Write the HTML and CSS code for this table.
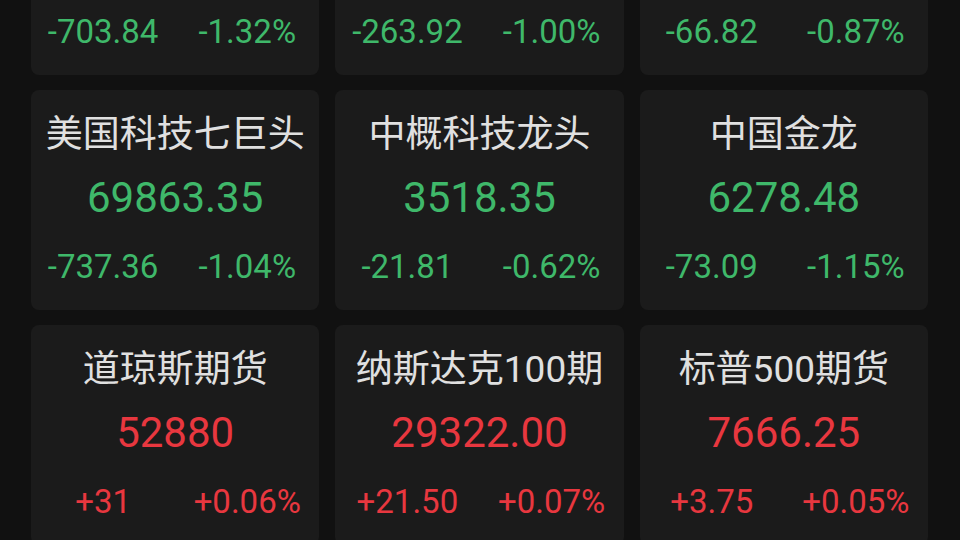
FILE: index.html
```html
<!DOCTYPE html>
<html lang="zh-CN">
<head>
  <meta charset="UTF-8" />
  <meta name="viewport" content="width=device-width, initial-scale=1.0"/>
  <title>全球指数</title>
  <link rel="stylesheet" href="styles.css">
</head>
<body>

  <div class="grid">
    <div class="card down">
      <div class="name">道琼斯</div>
      <div class="price">52617.29</div>
      <div class="change"><span>-703.84</span><span>-1.32%</span></div>
    </div>
    <div class="card down">
      <div class="name">纳斯达克</div>
      <div class="price">26128.41</div>
      <div class="change"><span>-263.92</span><span>-1.00%</span></div>
    </div>
    <div class="card down">
      <div class="name">标普500</div>
      <div class="price">7613.27</div>
      <div class="change"><span>-66.82</span><span>-0.87%</span></div>
    </div>

    <div class="card down">
      <div class="name">美国科技七巨头</div>
      <div class="price">69863.35</div>
      <div class="change"><span>-737.36</span><span>-1.04%</span></div>
    </div>
    <div class="card down">
      <div class="name">中概科技龙头</div>
      <div class="price">3518.35</div>
      <div class="change"><span>-21.81</span><span>-0.62%</span></div>
    </div>
    <div class="card down">
      <div class="name">中国金龙</div>
      <div class="price">6278.48</div>
      <div class="change"><span>-73.09</span><span>-1.15%</span></div>
    </div>

    <div class="card up">
      <div class="name">道琼斯期货</div>
      <div class="price">52880</div>
      <div class="change"><span>+31</span><span>+0.06%</span></div>
    </div>
    <div class="card up">
      <div class="name">纳斯达克100期</div>
      <div class="price">29322.00</div>
      <div class="change"><span>+21.50</span><span>+0.07%</span></div>
    </div>
    <div class="card up">
      <div class="name">标普500期货</div>
      <div class="price">7666.25</div>
      <div class="change"><span>+3.75</span><span>+0.05%</span></div>
    </div>
  </div>

</body>
</html>
```

FILE: styles.css
```css
body {
  margin: 0;
  background-color: #111;
  font-family: Roboto, "Noto Sans CJK SC", sans-serif;
  overflow: hidden;
}
.grid {
  display: grid;
  grid-template-columns: repeat(3, 1fr);
  gap: 15px 16px;
  width: 897px;
  margin: -145px 0 0 31px;
}
.card {
  background-color: #1b1b1b;
  border-radius: 8px;
  height: 220px;
  box-sizing: border-box;
  padding-top: 22px;
  text-align: center;
}
.name {
  height: 46px;
  line-height: 46px;
  font-size: 37px;
  color: #e0e0e0;
}
.price {
  height: 52px;
  line-height: 52px;
  margin-top: 14px;
  font-size: 42px;
}
.change {
  display: flex;
  height: 40px;
  line-height: 40px;
  margin-top: 23px;
  font-size: 33px;
}
.change span {
  flex: 1;
}
.down .price, .down .change {
  color: #3fb86a;
}
.up .price, .up .change {
  color: #e8373f;
}
```
